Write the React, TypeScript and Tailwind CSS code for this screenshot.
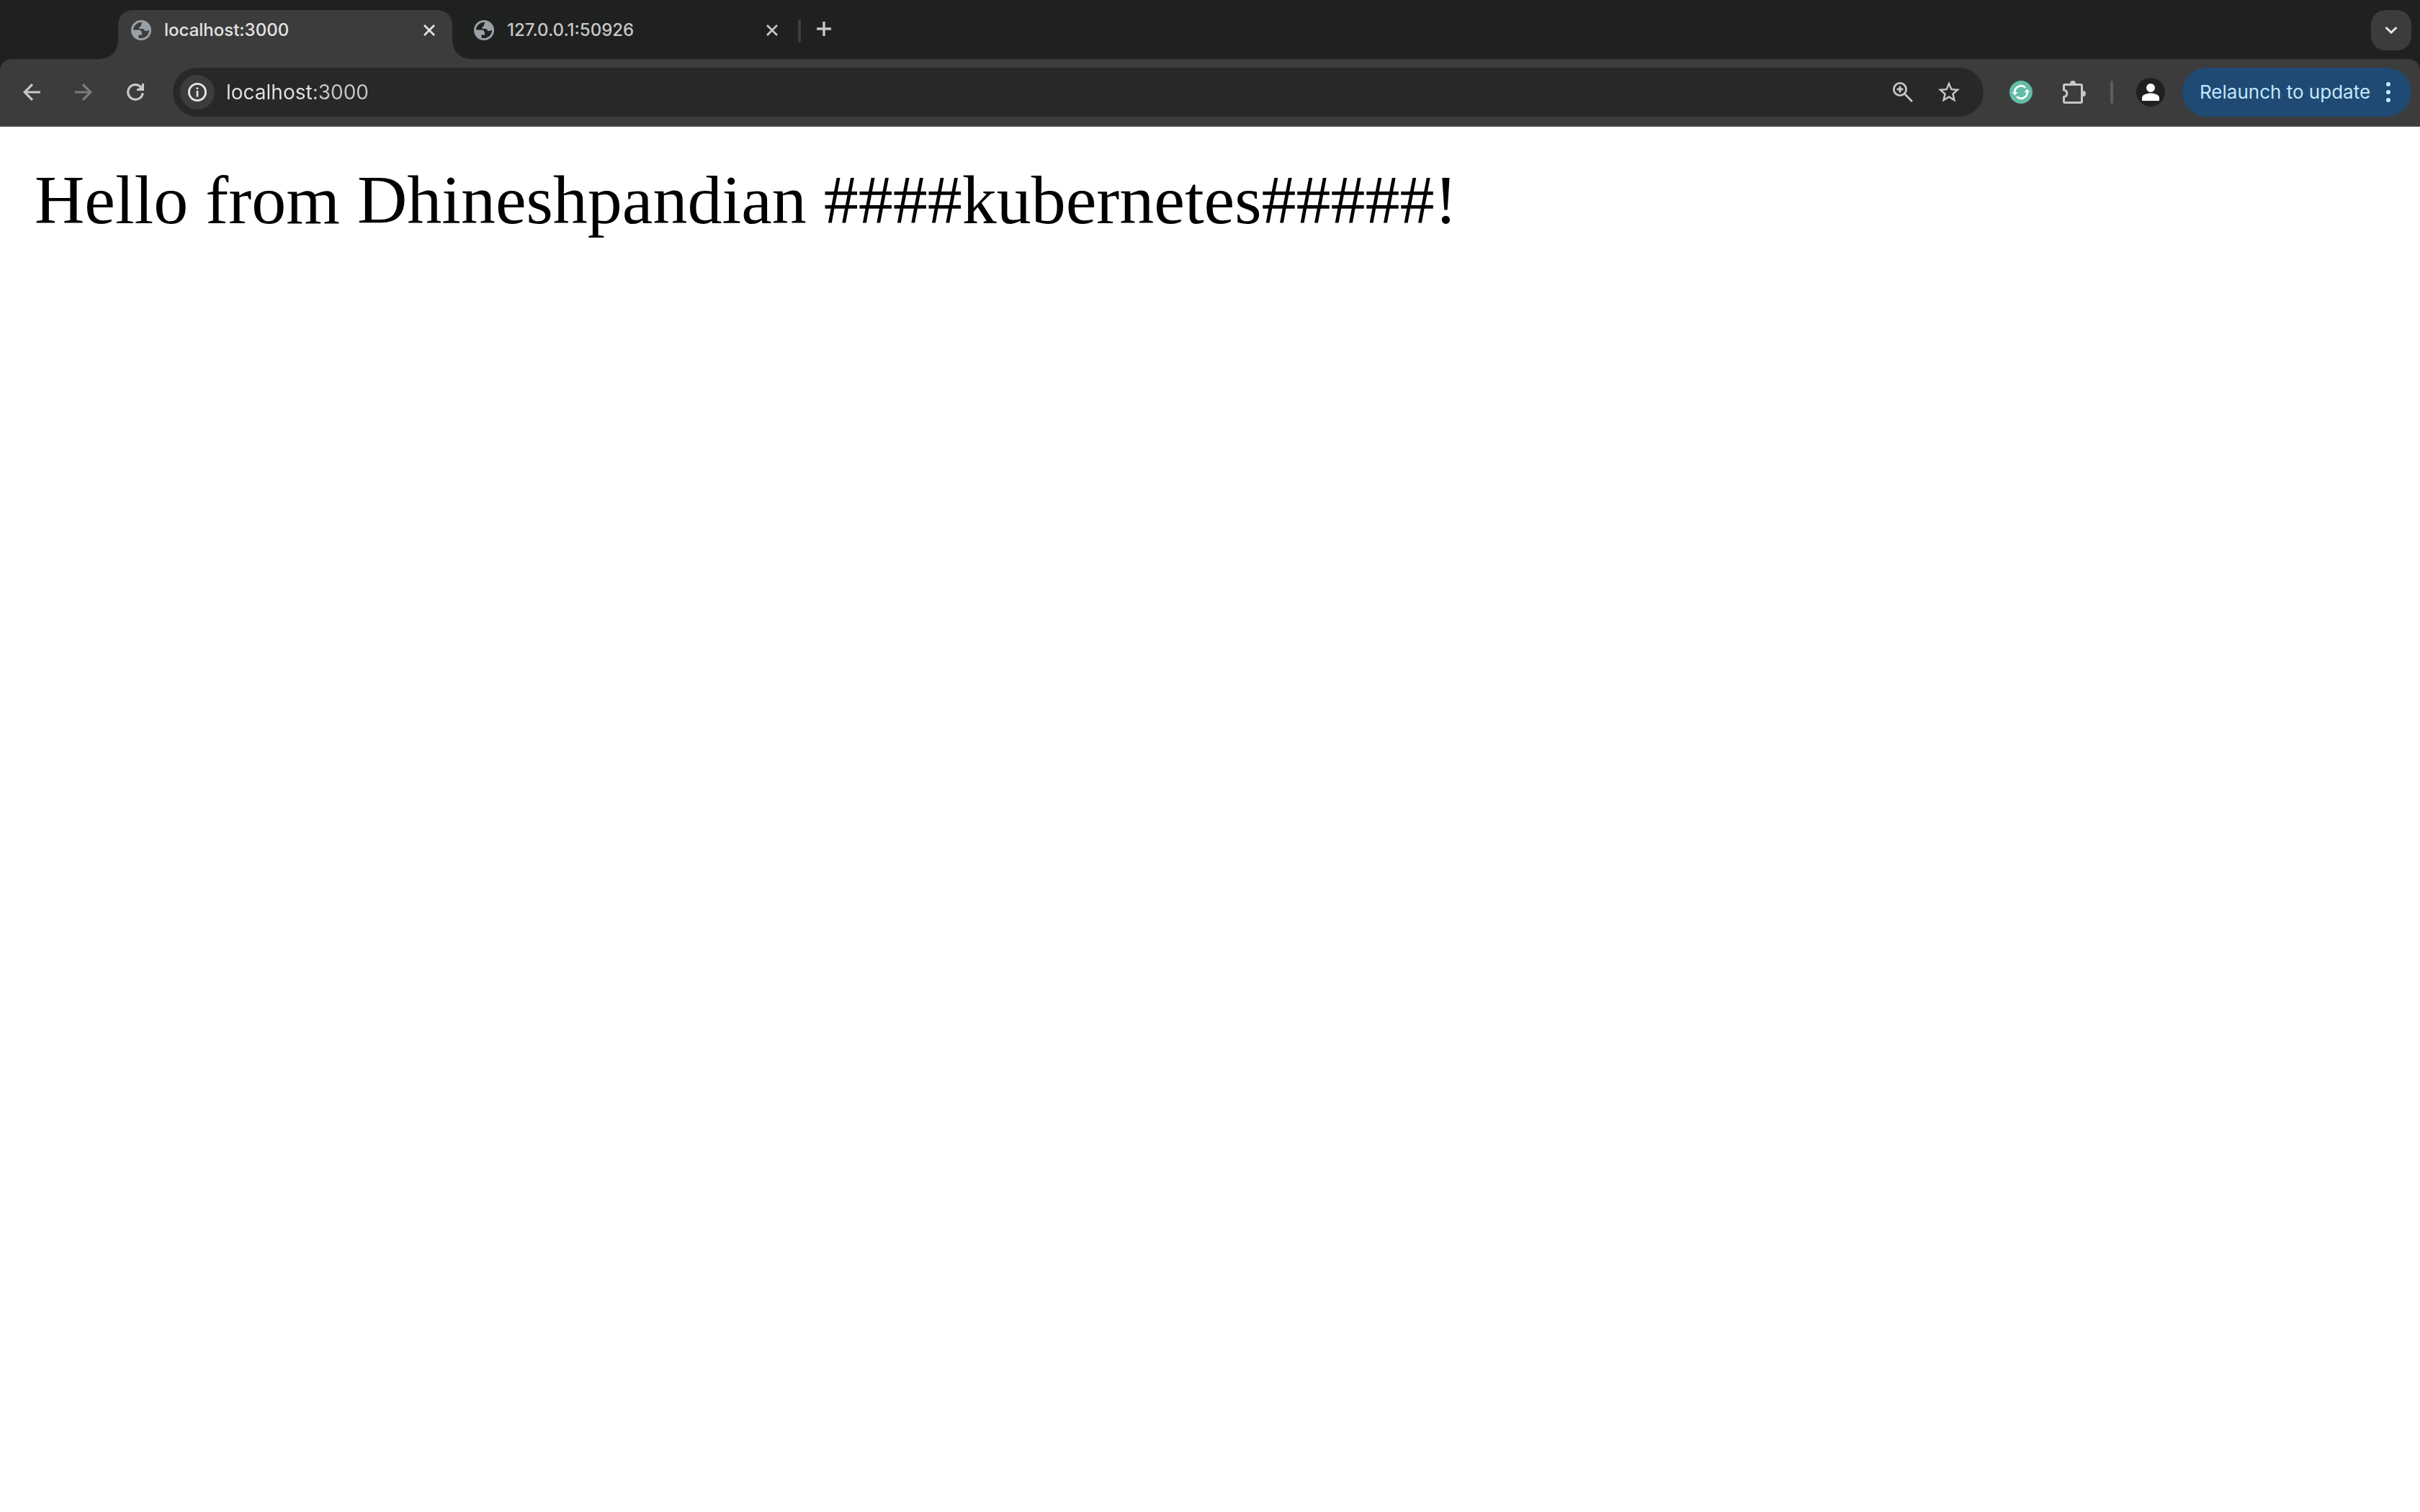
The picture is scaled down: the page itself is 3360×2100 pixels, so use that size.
import React from "react";

type SvgProps = { className?: string };

function GlobeIcon() {
  return (
    <svg viewBox="0 0 28 28" className="size-7 shrink-0" aria-hidden="true">
      <path
        fill="#9aa0a6"
        fillRule="evenodd"
        d="M14 0a14 14 0 1 1 0 28a14 14 0 0 1 0-28z M3 13.5A11 11 0 0 1 16 3.2C14.6 4 14 5 14 7C14 8.4 13.2 9 12 9H11.5V12H16C17.8 12 18.6 13 18.8 15H22L25 13.5A11 11 0 0 1 10.5 24.5V20.5H15V18.5C15 15.5 13.5 13.5 10.5 13.5z"
      />
    </svg>
  );
}

function CloseIcon() {
  return (
    <svg viewBox="0 0 16 16" className="size-4" fill="none" stroke="currentColor" strokeWidth="2.8" aria-hidden="true">
      <path d="M1 1L15 15M15 1L1 15" />
    </svg>
  );
}

function PlusIcon() {
  return (
    <svg viewBox="0 0 20 20" className="size-5" fill="none" stroke="currentColor" strokeWidth="3.4" aria-hidden="true">
      <path d="M10 0V20M0 10H20" />
    </svg>
  );
}

function ArrowIcon({ className }: SvgProps) {
  return (
    <svg viewBox="0 0 24 24" className={className} fill="none" stroke="currentColor" strokeWidth="3.2" aria-hidden="true">
      <path d="M24 12H3M13 1.2L2.2 12L13 22.8" strokeLinejoin="miter" />
    </svg>
  );
}

function ReloadIcon() {
  return (
    <svg viewBox="0 0 24 24" className="size-6" fill="none" aria-hidden="true">
      <path d="M22.2 13.2A10.3 10.3 0 1 1 19.6 5" stroke="currentColor" strokeWidth="3.2" />
      <path d="M21 0H24V10H14V7H16.5L21 2.5z" fill="currentColor" />
    </svg>
  );
}

function InfoIcon() {
  return (
    <svg viewBox="0 0 26 26" className="size-[26px]" fill="none" stroke="currentColor" aria-hidden="true">
      <circle cx="13" cy="13" r="11.6" strokeWidth="2.8" />
      <path d="M13 11V19.4M13 6.4V9" strokeWidth="2.7" />
    </svg>
  );
}

function ZoomInIcon() {
  return (
    <svg viewBox="0 0 28 28" className="size-7" fill="none" stroke="currentColor" aria-hidden="true">
      <circle cx="10" cy="10" r="8.6" strokeWidth="2.8" />
      <path d="M16 16L27 27M10 5.6V14.4M5.6 10H14.4" strokeWidth="2.8" />
    </svg>
  );
}

function StarIcon() {
  return (
    <svg viewBox="0 0 24 24" className="size-9" fill="currentColor" aria-hidden="true">
      <path d="M22 9.24l-7.19-.62L12 2 9.19 8.63 2 9.24l5.46 4.73L5.82 21 12 17.27 18.18 21l-1.63-7.03L22 9.24zM12 15.4l-3.76 2.27 1-4.28-3.32-2.88 4.38-.38L12 6.1l1.71 4.04 4.38.38-3.32 2.88 1 4.28L12 15.4z" />
    </svg>
  );
}

function SyncBadgeIcon() {
  return (
    <svg viewBox="-16 -16 32 32" className="size-8" aria-hidden="true">
      <circle r="16" fill="#62bda8" />
      <g fill="none" stroke="#fff" strokeWidth="2.7">
        <path d="M-8.6 1A8.7 8.7 0 0 1 6 -6.3" />
        <path d="M8.6 -1A8.7 8.7 0 0 1 -6 6.3" />
      </g>
      <path fill="#fff" d="M-12.2 0H-4.4L-8.3 4.4zM12.2 0H4.4L8.3 -4.4z" />
    </svg>
  );
}

function PuzzleIcon() {
  return (
    <svg viewBox="0 0 32 32" className="size-8" aria-hidden="true">
      <path
        d="M1.5 7Q1.5 5.4 3.2 5.4H24.8Q26.5 5.4 26.5 7V28.8Q26.5 30.5 24.8 30.5H3.2Q1.5 30.5 1.5 28.8V22.8C7.2 21.4 7.2 14.2 1.5 12.8z"
        fill="none"
        stroke="currentColor"
        strokeWidth="3"
      />
      <path d="M10 5V4A4 4 0 0 1 18 4V5zM27 14H28A4 4 0 0 1 28 22H27z" fill="currentColor" />
    </svg>
  );
}

function ProfileIcon() {
  return (
    <svg viewBox="0 0 40 40" className="size-10" aria-hidden="true">
      <circle cx="20" cy="20" r="20" fill="#1f2120" />
      <circle cx="20" cy="14" r="6" fill="#fff" />
      <path d="M8 32V28C8 24 14 21.6 20 21.6S32 24 32 28V32z" fill="#fff" />
    </svg>
  );
}

function Tab({ title, active = false }: { title: string; active?: boolean }) {
  return (
    <div
      className={
        active
          ? "relative flex h-[68px] w-[464px] items-start rounded-t-[20px] bg-[#3c3c3c] text-[#e3e3e3] before:absolute before:bottom-0 before:-left-6 before:size-6 before:bg-[radial-gradient(circle_at_0_0,transparent_23px,#3c3c3c_24px)] after:absolute after:-right-6 after:bottom-0 after:size-6 after:bg-[radial-gradient(circle_at_100%_0,transparent_23px,#3c3c3c_24px)]"
          : "flex h-[68px] w-[464px] items-start text-[#c7c7c7]"
      }
    >
      <button type="button" className="flex h-14 flex-1 items-center gap-[18px] pl-[18px] text-left">
        <GlobeIcon />
        <span className="text-[24px] leading-8 font-medium">{title}</span>
      </button>
      <button type="button" aria-label={`Close ${title}`} className="mr-3 flex h-14 w-10 items-center justify-center">
        <CloseIcon />
      </button>
    </div>
  );
}

export default function App() {
  return (
    <div className="min-h-screen bg-white font-['Inter','Liberation_Sans',sans-serif]">
      <header className="bg-[#1f2120]">
        <nav aria-label="Tabs" className="flex h-[82px] items-start pt-[14px] pr-3 pl-[164px]">
          <Tab title="localhost:3000" active />
          <div className="w-3" />
          <Tab title="127.0.0.1:50926" />
          <div className="mt-[13px] ml-1 h-8 w-1 rounded-full bg-[#3c3c3c]" />
          <button type="button" aria-label="New tab" className="ml-1 flex h-[52px] w-14 items-center justify-center text-[#c7c7c7]">
            <PlusIcon />
          </button>
          <button
            type="button"
            aria-label="Search tabs"
            className="ml-auto flex size-14 items-center justify-center rounded-[20px] bg-[#3c3c3c] text-[#e3e3e3]"
          >
            <svg viewBox="0 0 18 12" className="h-3 w-[18px]" fill="none" stroke="currentColor" strokeWidth="3" aria-hidden="true">
              <path d="M1.5 2L9 9.2L16.5 2" />
            </svg>
          </button>
        </nav>

        <div className="flex h-[94px] items-center rounded-t-[16px] border-b-2 border-[#4a4648] bg-[#3c3c3c] pr-3 pl-4 text-[#c7c7c7]">
          <div className="flex gap-4">
            <button type="button" aria-label="Back" className="flex size-14 items-center justify-center">
              <ArrowIcon className="size-6" />
            </button>
            <button type="button" aria-label="Forward" disabled className="flex size-14 items-center justify-center text-[#7c7c7c]">
              <ArrowIcon className="size-6 rotate-180" />
            </button>
            <button type="button" aria-label="Reload" className="flex size-14 items-center justify-center">
              <ReloadIcon />
            </button>
          </div>

          <div className="ml-6 flex h-[68px] min-w-0 flex-1 items-center rounded-full bg-[#282828] pr-5 pl-[10px]">
            <button
              type="button"
              aria-label="View site information"
              className="flex size-12 items-center justify-center rounded-full bg-[#3c3c3c] text-[#e3e3e3]"
            >
              <InfoIcon />
            </button>
            <input
              type="text"
              aria-label="Address"
              defaultValue="localhost:3000"
              className="ml-4 min-w-0 flex-1 bg-[linear-gradient(90deg,#e3e3e3_119px,#c7c7c7_119px)] bg-clip-text text-[28px] leading-9 text-transparent outline-none"
            />
            <button type="button" aria-label="Zoom" className="flex size-14 items-center justify-center">
              <ZoomInIcon />
            </button>
            <button type="button" aria-label="Bookmark this tab" className="ml-2 flex size-14 items-center justify-center">
              <StarIcon />
            </button>
          </div>

          <button type="button" aria-label="Sync extension" className="ml-5 flex size-16 items-center justify-center">
            <SyncBadgeIcon />
          </button>
          <button type="button" aria-label="Extensions" className="ml-[10px] flex size-16 items-center justify-center">
            <PuzzleIcon />
          </button>
          <div className="ml-[18px] h-8 w-1 rounded-full bg-[#5e5e5e]" />
          <button type="button" aria-label="Profile" className="ml-5 flex size-16 items-center justify-center">
            <ProfileIcon />
          </button>
          <button
            type="button"
            className="ml-3 flex h-[68px] w-[318px] items-center justify-between rounded-full bg-[#1f4a73] pr-7 pl-6 text-[#c2e7ff]"
          >
            <span className="text-[26px] leading-8">Relaunch to update</span>
            <svg viewBox="0 0 8 28" className="h-7 w-2" fill="currentColor" aria-hidden="true">
              <circle cx="4" cy="3" r="3" />
              <circle cx="4" cy="14" r="3" />
              <circle cx="4" cy="25" r="3" />
            </svg>
          </button>
        </div>
      </header>

      <main className="p-12">
        <p className="font-['Liberation_Serif','Times_New_Roman',serif] text-[96px] leading-[108px] text-black">
          Hello from Dhineshpandian ####kubernetes#####!
        </p>
      </main>
    </div>
  );
}
